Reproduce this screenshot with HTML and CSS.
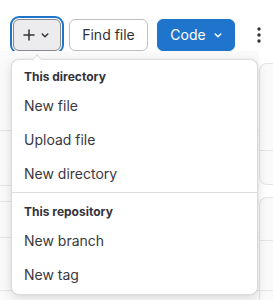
FILE: index.html
```html
<!DOCTYPE html>
<html lang="en">
<head>
<meta charset="utf-8">
<link rel="stylesheet" href="styles.css">
</head>
<body>
<div class="page">
  <div class="toolbar">
    <button class="btn btn-add" type="button" aria-label="Add">
      <svg class="icon" viewBox="0 0 16 16"><path d="M8 2.25a.75.75 0 0 1 .75.75v4.25H13a.75.75 0 0 1 0 1.5H8.75V13a.75.75 0 0 1-1.5 0V8.75H3a.75.75 0 0 1 0-1.5h4.25V3A.75.75 0 0 1 8 2.25z"/></svg>
      <svg class="icon" viewBox="0 0 16 16"><path d="M4.72 6.47a.75.75 0 0 1 1.06 0L8 8.69l2.22-2.22a.75.75 0 1 1 1.06 1.060l-2.75 2.75a.75.75 0 0 1-1.06 0L4.72 7.53a.75.75 0 0 1 0-1.06z"/></svg>
    </button>
    <button class="btn btn-default" type="button">Find file</button>
    <button class="btn btn-code" type="button">Code
      <svg class="icon" viewBox="0 0 16 16"><path d="M4.72 6.47a.75.75 0 0 1 1.06 0L8 8.69l2.22-2.22a.75.75 0 1 1 1.06 1.06l-2.75 2.75a.75.75 0 0 1-1.06 0L4.72 7.53a.75.75 0 0 1 0-1.06z"/></svg>
    </button>
    <button class="btn btn-kebab" type="button" aria-label="More actions">
      <svg class="icon" viewBox="0 0 16 16"><circle cx="8" cy="2" r="1.7"/><circle cx="8" cy="8" r="1.7"/><circle cx="8" cy="14" r="1.7"/></svg>
    </button>
  </div>

  <div class="backdrop">
    <div class="left-col">
      <div class="row r1"></div>
      <div class="row r2"></div>
      <div class="row r3"></div>
      <div class="row r4"></div>
      <div class="row r5"></div>
    </div>
    <div class="right-col">
      <div class="card c1">
        <div class="card-row cr1"></div>
      </div>
      <div class="card c2">
        <div class="card-row cr2"></div>
        <div class="card-row cr3"></div>
      </div>
    </div>
  </div>

  <div class="dropdown">
    <span class="caret"></span>
    <div class="group-label">This directory</div>
    <ul class="items">
      <li class="item">New file</li>
      <li class="item">Upload file</li>
      <li class="item">New directory</li>
    </ul>
    <div class="divider"></div>
    <div class="group-label">This repository</div>
    <ul class="items">
      <li class="item">New branch</li>
      <li class="item">New tag</li>
    </ul>
  </div>
</div>
</body>
</html>
```

FILE: styles.css
```css
* { box-sizing: border-box; }

html, body {
  margin: 0;
  padding: 0;
  background: #ffffff;
}

body {
  font-family: Inter, "Noto Sans", "Liberation Sans", sans-serif;
  color: #3a383f;
  width: 273px;
  height: 300px;
  overflow: hidden;
}

.page {
  position: relative;
  width: 273px;
  height: 300px;
  overflow: hidden;
}

.toolbar {
  display: flex;
  align-items: center;
  gap: 8px;
  padding: 19px 0 0 13px;
  height: 51px;
}

.btn {
  height: 32px;
  display: inline-flex;
  align-items: center;
  justify-content: center;
  border-radius: 6px;
  font-family: inherit;
  font-size: 14px;
  line-height: 16px;
  margin: 0;
  cursor: pointer;
  flex: none;
}

.icon {
  width: 16px;
  height: 16px;
  fill: currentColor;
  flex: none;
}

.btn-add {
  width: 48px;
  padding: 0 8px;
  background: #ececef;
  border: 1px solid #89888d;
  color: #333238;
  box-shadow: 0 0 0 1px #ffffff, 0 0 0 3px #1f75cb;
}

.btn-default {
  padding: 0 12px;
  width: 79px;
  background: #ffffff;
  border: 1px solid #bfbfc3;
  color: #333238;
}

.btn-code {
  margin-left: 1px;
  width: 78px;
  padding: 0 8px 0 12px;
  gap: 4px;
  background: #1f75cb;
  border: 1px solid #1f75cb;
  color: #ffffff;
}

.btn-kebab {
  width: 32px;
  padding: 0;
  background: transparent;
  border: 0;
  color: #333238;
}

/* page content peeking out behind the dropdown */
.backdrop {
  display: grid;
  grid-template-columns: 259px 1fr;
}

.left-col {
  background: #fafafb;
}

.row {
  border-bottom: 1px solid #e4e4e7;
}
.r1 { height: 80px; }
.r2 { height: 55px; }
.r3 { height: 16px; }
.r4 { height: 36px; }
.r5 { height: 53px; }

.right-col {
  padding-top: 12px;
  display: flex;
  flex-direction: column;
  gap: 12px;
}

.card {
  background: #fafafb;
  border: 1px solid #e4e4e7;
  border-right: 0;
  border-radius: 8px 0 0 8px;
}
.c1 { height: 122px; }
.c2 { height: 120px; }

.card-row { border-bottom: 1px solid #e4e4e7; }
.cr1 { height: 87px; }
.cr2 { height: 43px; }
.cr3 { height: 50px; }

/* dropdown overlay */
.dropdown {
  position: absolute;
  left: 11px;
  top: 59px;
  width: 247px;
  background: #ffffff;
  border: 1px solid #dcdcde;
  border-radius: 8px;
  padding: 4px 0 3px;
  box-shadow: 0 4px 12px rgba(5, 5, 6, 0.12), 0 0 2px rgba(5, 5, 6, 0.08);
}

.caret {
  position: absolute;
  top: -4px;
  left: 21px;
  width: 8px;
  height: 8px;
  background: #ffffff;
  border-top: 1px solid #dcdcde;
  border-left: 1px solid #dcdcde;
  transform: rotate(45deg);
}

.group-label {
  height: 24px;
  display: flex;
  align-items: center;
  padding: 0 12px;
  font-size: 12px;
  font-weight: 700;
  color: #333238;
}

.items {
  list-style: none;
  margin: 0;
  padding: 0;
}

.item {
  height: 34px;
  display: flex;
  align-items: center;
  padding: 0 12px;
  font-size: 14px;
  color: #3a383f;
}

.divider {
  margin: 2px 0 6px;
  border-top: 1px solid #dcdcde;
}
```
